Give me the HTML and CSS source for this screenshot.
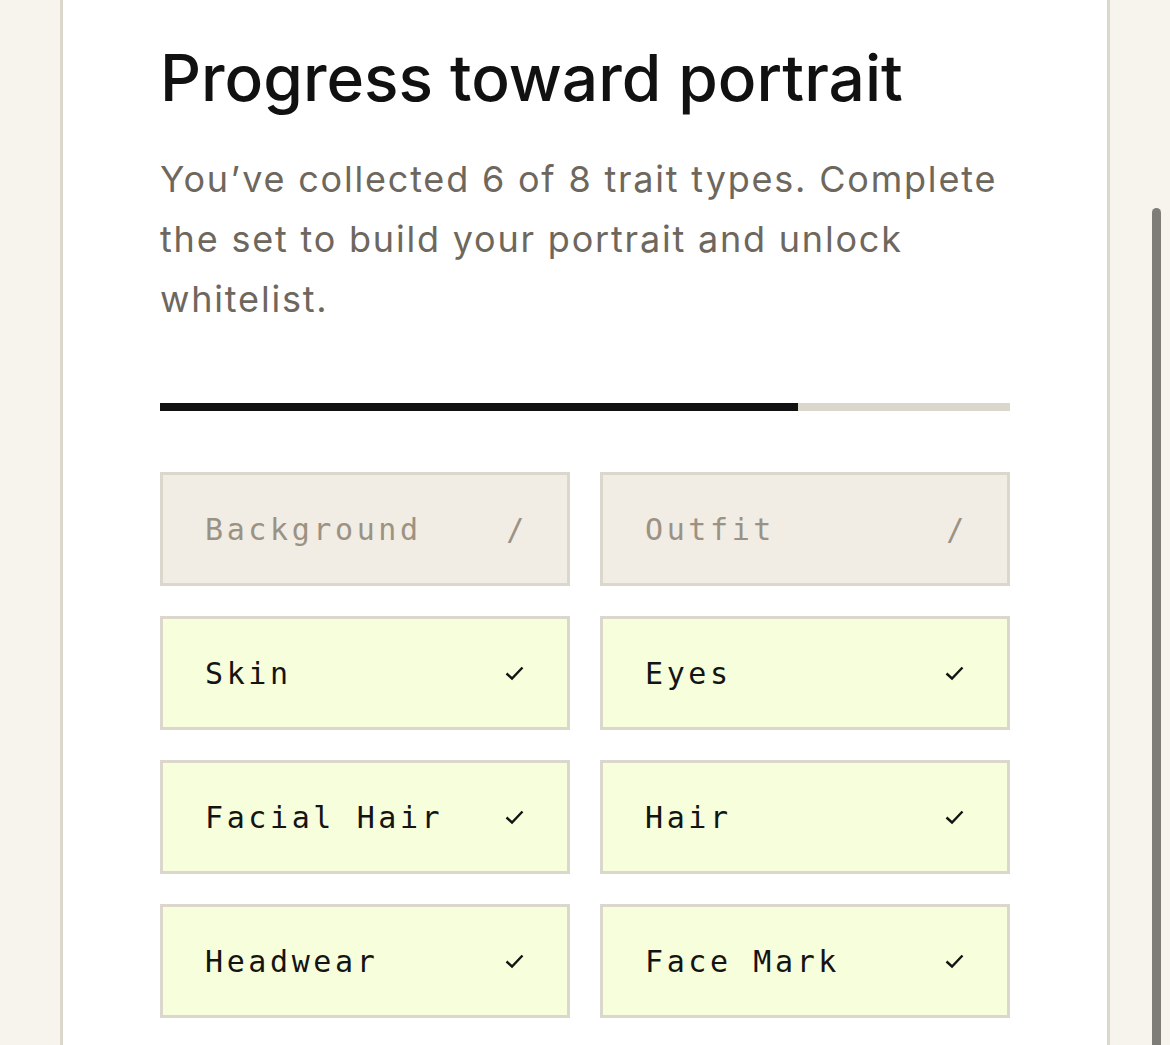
FILE: index.html
```html
<!DOCTYPE html>
<html>
<head>
<meta charset="utf-8">
<link rel="stylesheet" href="styles.css">
</head>
<body>
<div class="page">
  <section class="card">
    <h1 class="title">Progress toward portrait</h1>
    <p class="lead">You’ve collected 6 of 8 trait types. Complete the set to build your portrait and unlock whitelist.</p>
    <div class="bar"><div class="bar-fill" style="width:75%"></div></div>
    <div class="traits">
      <div class="trait missing"><span>Background</span><span class="mark">/</span></div>
      <div class="trait missing"><span>Outfit</span><span class="mark">/</span></div>
      <div class="trait have"><span>Skin</span><svg class="check" viewBox="0 0 20 16"><path d="M2 8.5l5.5 5L18 2.5"/></svg></div>
      <div class="trait have"><span>Eyes</span><svg class="check" viewBox="0 0 20 16"><path d="M2 8.5l5.5 5L18 2.5"/></svg></div>
      <div class="trait have"><span>Facial Hair</span><svg class="check" viewBox="0 0 20 16"><path d="M2 8.5l5.5 5L18 2.5"/></svg></div>
      <div class="trait have"><span>Hair</span><svg class="check" viewBox="0 0 20 16"><path d="M2 8.5l5.5 5L18 2.5"/></svg></div>
      <div class="trait have"><span>Headwear</span><svg class="check" viewBox="0 0 20 16"><path d="M2 8.5l5.5 5L18 2.5"/></svg></div>
      <div class="trait have"><span>Face Mark</span><svg class="check" viewBox="0 0 20 16"><path d="M2 8.5l5.5 5L18 2.5"/></svg></div>
    </div>
  </section>
</div>
<div class="scrollbar"></div>
</body>
</html>
```
FILE: styles.css
```css
html, body {
  margin: 0;
  padding: 0;
  background: #f7f4ee;
  height: 100%;
  overflow: hidden;
}
.page {
  padding-left: 60px;
}
.card {
  width: 850px;
  background: #ffffff;
  border-left: 3px solid #dcd7cd;
  border-right: 3px solid #dcd7cd;
  padding: 38px 97px 60px 97px;
  min-height: 1100px;
}
.title {
  margin: 0;
  font-family: "Inter", sans-serif;
  font-weight: 500;
  font-size: 64px;
  line-height: 80px;
  letter-spacing: 0;
  color: #111111;
}
.lead {
  margin: 31px 0 0 0;
  font-family: "Inter", sans-serif;
  font-size: 36px;
  line-height: 60px;
  color: #6e675d;
  letter-spacing: 1.8px;
}
.bar {
  margin-top: 74px;
  height: 8px;
  background: #dcd7cd;
}
.bar-fill {
  height: 100%;
  background: #111111;
}
.traits {
  margin-top: 61px;
  display: grid;
  grid-template-columns: 1fr 1fr;
  gap: 30px;
}
.trait {
  box-sizing: border-box;
  height: 114px;
  border: 3px solid #dcd7cd;
  display: flex;
  align-items: center;
  justify-content: space-between;
  padding: 0 42px 0 42px;
  font-family: "DejaVu Sans Mono", monospace;
  font-size: 30px;
  letter-spacing: 3.6px;
}
.missing {
  background: #f1ece4;
  color: #9b9283;
}
.missing .mark {
  margin-right: -3px;
}
.have {
  background: #f7fedb;
  color: #141414;
}
.check {
  width: 21px;
  height: 16px;
  fill: none;
  stroke: #141414;
  stroke-width: 2.4;
}
.scrollbar {
  position: fixed;
  left: 1152px;
  top: 208px;
  width: 9px;
  bottom: 0;
  background: #7f7d77;
  border-radius: 5px 5px 0 0;
}
```
